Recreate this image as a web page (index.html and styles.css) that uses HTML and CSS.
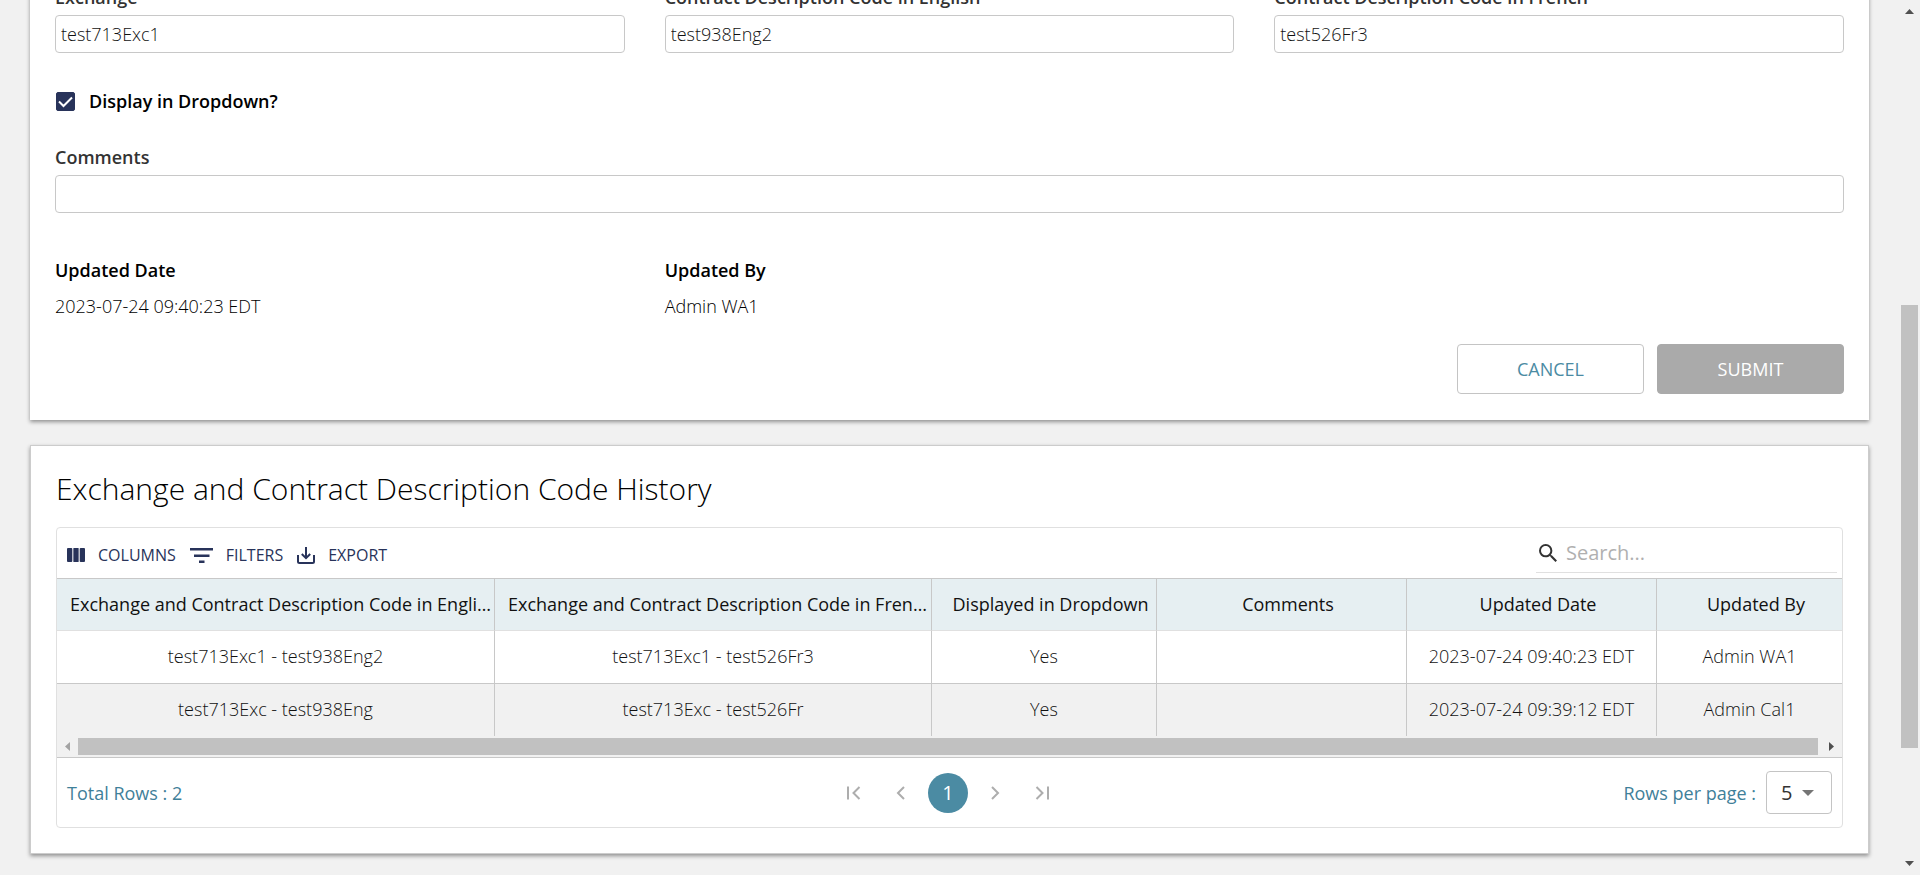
FILE: index.html
```html
<!DOCTYPE html>
<html lang="en">
<head>
<meta charset="utf-8">
<title>Exchange and Contract Description Code</title>
<link rel="stylesheet" href="styles.css">
</head>
<body>
<div class="shell">
  <main class="page">
    <form class="card card-form">
      <div class="fields">
        <div class="field">
          <label class="label" for="exchange">Exchange</label>
          <input class="input" id="exchange" type="text" value="test713Exc1">
        </div>
        <div class="field">
          <label class="label" for="code-en">Contract Description Code in English</label>
          <input class="input" id="code-en" type="text" value="test938Eng2">
        </div>
        <div class="field">
          <label class="label" for="code-fr">Contract Description Code in French</label>
          <input class="input" id="code-fr" type="text" value="test526Fr3">
        </div>
      </div>
      <label class="check">
        <span class="check-box">
          <input class="check-input" type="checkbox" checked>
          <svg class="check-mark" viewBox="0 0 19 19" aria-hidden="true"><path d="M3 9.5l4.5 4.5L16 5.5"/></svg>
        </span>
        <span class="check-text">Display in Dropdown?</span>
      </label>
      <div class="field field-comments">
        <label class="label" for="comments">Comments</label>
        <input class="input" id="comments" type="text">
      </div>
      <dl class="fields meta">
        <div class="meta-item">
          <dt class="meta-name">Updated Date</dt>
          <dd class="meta-value">2023-07-24 09:40:23 EDT</dd>
        </div>
        <div class="meta-item">
          <dt class="meta-name">Updated By</dt>
          <dd class="meta-value">Admin WA1</dd>
        </div>
      </dl>
      <div class="actions">
        <button class="button" type="button">CANCEL</button>
        <button class="button button-disabled" type="submit" disabled>SUBMIT</button>
      </div>
    </form>

    <section class="card card-history">
      <h2 class="title">Exchange and Contract Description Code History</h2>
      <div class="grid">
        <div class="toolbar">
          <div class="tools">
            <button class="tool" type="button">
              <svg width="18" height="14" viewBox="0 0 18 14" aria-hidden="true"><rect width="5.300" height="14" rx="1"/><rect x="6.350" width="5.300" height="14" rx=".5"/><rect x="12.700" width="5.300" height="14" rx="1"/></svg>
              COLUMNS
            </button>
            <button class="tool" type="button">
              <svg width="23" height="15" viewBox="0 0 23 15" aria-hidden="true"><path d="M0 0h23v2.5H0zM4 6.5h15.500V9H4zM9 12.500h5.500V15H9z"/></svg>
              FILTERS
            </button>
            <button class="tool" type="button">
              <svg width="18" height="17" viewBox="0 0 18 17" aria-hidden="true"><path d="M1 8v6.500q0 1.500 1.500 1.500h13q1.500 0 1.500-1.500V8M9 0v11M4.800 7L9 11.200 13.200 7" fill="none" stroke="currentColor" stroke-width="2"/></svg>
              EXPORT
            </button>
          </div>
          <label class="search">
            <svg width="18" height="18" viewBox="3 3 17.500 17.500" aria-hidden="true"><path d="M15.500 14h-.79l-.28-.27A6.471 6.471 0 0 0 16 9.500 6.500 6.500 0 1 0 9.500 16c1.610 0 3.090-.59 4.230-1.570l.27.28v.79l5 4.990L20.490 19l-4.990-5zm-6 0C7.010 14 5 11.990 5 9.500S7.010 5 9.500 5 14 7.010 14 9.500 11.990 14 9.500 14z"/></svg>
            <input class="search-input" type="search" placeholder="Search..." aria-label="Search">
          </label>
        </div>
        <table class="table">
          <colgroup>
            <col class="col-code-en"><col class="col-code-fr"><col class="col-shown"><col class="col-wide"><col class="col-wide"><col>
          </colgroup>
          <thead>
            <tr>
              <th>Exchange and Contract Description Code in English</th>
              <th>Exchange and Contract Description Code in French</th>
              <th>Displayed in Dropdown</th>
              <th>Comments</th>
              <th>Updated Date</th>
              <th>Updated By</th>
            </tr>
          </thead>
          <tbody>
            <tr>
              <td>test713Exc1 - test938Eng2</td>
              <td>test713Exc1 - test526Fr3</td>
              <td>Yes</td>
              <td></td>
              <td>2023-07-24 09:40:23 EDT</td>
              <td>Admin WA1</td>
            </tr>
            <tr>
              <td>test713Exc - test938Eng</td>
              <td>test713Exc - test526Fr</td>
              <td>Yes</td>
              <td></td>
              <td>2023-07-24 09:39:12 EDT</td>
              <td>Admin Cal1</td>
            </tr>
          </tbody>
        </table>
        <div class="hscroll" aria-hidden="true">
          <svg class="arrow-off" width="5" height="9" viewBox="0 0 5 9"><path d="M5 0v9L0 4.500z"/></svg>
          <div class="hscroll-thumb"></div>
          <svg class="arrow-on" width="5" height="9" viewBox="0 0 5 9"><path d="M0 0v9l5-4.500z"/></svg>
        </div>
        <div class="footer">
          <span class="count">Total Rows : 2</span>
          <nav class="pager" aria-label="Pages">
            <button class="page-button" type="button" aria-label="First page" disabled><svg width="14" height="14" viewBox="0 0 14 14"><path d="M1 .5v13M12.500 1l-6 6 6 6"/></svg></button>
            <button class="page-button" type="button" aria-label="Previous page" disabled><svg width="14" height="14" viewBox="0 0 14 14"><path d="M10 1L4 7l6 6"/></svg></button>
            <button class="page-button page-current" type="button" aria-current="page">1</button>
            <button class="page-button" type="button" aria-label="Next page" disabled><svg width="14" height="14" viewBox="0 0 14 14"><path d="M4 1l6 6-6 6"/></svg></button>
            <button class="page-button" type="button" aria-label="Last page" disabled><svg width="14" height="14" viewBox="0 0 14 14"><path d="M13 .5v13M1.500 1l6 6-6 6"/></svg></button>
          </nav>
          <div class="size">
            <label for="rows">Rows per page :</label>
            <span class="select-wrap">
              <select class="select" id="rows"><option>5</option><option>10</option><option>25</option></select>
              <svg class="select-arrow" width="12" height="6" viewBox="0 0 12 6" aria-hidden="true"><path d="M0 0h12L6 6z"/></svg>
            </span>
          </div>
        </div>
      </div>
    </section>
  </main>
  <div class="vscroll" aria-hidden="true">
    <svg class="arrow-on" width="9" height="5" viewBox="0 0 9 5"><path d="M0 5h9L4.500 0z"/></svg>
    <div class="vscroll-track"><div class="vscroll-thumb"></div></div>
    <svg class="arrow-on" width="9" height="5" viewBox="0 0 9 5"><path d="M0 0h9L4.500 5z"/></svg>
  </div>
</div>
</body>
</html>
```

FILE: styles.css
```css
* {
  box-sizing: border-box;
}

body {
  margin: 0;
  background: #f1f1f1;
  color: #333;
  font: 300 18px/24px "Open Sans", "Noto Sans", sans-serif;
}

button,
input,
select {
  font: inherit;
  color: inherit;
}

svg {
  display: block;
  flex: none;
  fill: currentColor;
}

.shell {
  display: flex;
  height: 100vh;
  overflow: hidden;
}

.page {
  display: flex;
  flex: 1;
  flex-direction: column;
  gap: 25px;
  min-width: 0;
  padding: 0 31px 0 30px;
}

.card {
  flex: none;
  background: #fff;
  border: 1px solid #ccc;
  box-shadow: 0 2px 4px rgba(0, 0, 0, 0.4);
}

/* The form is scrolled up: its top edge lies above the window. */
.card-form {
  margin-top: -41px;
  padding: 25px 24px;
  border-color: #fff;
}

.fields {
  display: grid;
  grid-template-columns: repeat(3, 1fr);
  gap: 40px;
}

.label {
  display: block;
  margin-bottom: 6px;
  font-weight: 600;
}

.input {
  display: block;
  width: 100%;
  height: 38px;
  padding: 0 5px;
  background: #fff;
  border: 1px solid #c8c8c8;
  border-radius: 4px;
  color: #111;
}

.check {
  display: flex;
  align-items: center;
  gap: 14px;
  width: max-content;
  margin-top: 36px;
  padding-left: 1px;
  color: #000;
  font-weight: 600;
}

.check-box {
  position: relative;
  width: 19px;
  height: 19px;
}

.check-input {
  display: block;
  width: 100%;
  height: 100%;
  margin: 0;
  appearance: none;
  border: 1px solid #28335a;
  border-radius: 2px;
}

.check-input:checked {
  background: #28335a;
}

.check-mark {
  position: absolute;
  inset: 0;
  fill: none;
  stroke: #fff;
  stroke-width: 2;
}

.field-comments {
  margin-top: 32px;
}

.meta {
  margin: 45px 0 0;
  color: #000;
}

.meta-name {
  font-weight: 600;
}

.meta-value {
  margin: 12px 0 0;
}

.actions {
  display: flex;
  justify-content: flex-end;
  gap: 13px;
  margin-top: 26px;
}

.button {
  width: 187px;
  height: 50px;
  background: #fff;
  border: 1px solid #c4c4c4;
  border-radius: 4px;
  color: #4b8ba3;
  font-weight: 400;
}

.button-disabled {
  background: #aaa;
  border-color: #aaa;
  color: #fff;
}

.card-history {
  padding: 25px;
}

.title {
  margin: 0 0 20px;
  color: #000;
  font-size: 30px;
  font-weight: 300;
  line-height: 36px;
}

.grid {
  border: 1px solid #e0e0e0;
  border-radius: 4px;
}

.toolbar {
  display: flex;
  align-items: flex-end;
  justify-content: space-between;
  height: 50px;
  padding: 0 5px 5px 10px;
}

.tools {
  display: flex;
  align-items: center;
  gap: 14px;
  padding-bottom: 6px;
}

.tool {
  display: flex;
  align-items: center;
  gap: 13px;
  padding: 0;
  background: none;
  border: 0;
  color: #28335a;
  font-size: 16px;
  font-weight: 400;
}

.search {
  display: flex;
  align-items: center;
  gap: 9px;
  width: 301px;
  height: 40px;
  padding: 0 3px;
  border-bottom: 1px solid #e0e0e0;
}

.search-input {
  flex: 1;
  min-width: 0;
  padding: 0;
  background: none;
  border: 0;
  font-size: 20px;
  font-weight: 400;
}

.search-input::placeholder {
  color: #b0b0b0;
}

.table {
  width: 100%;
  table-layout: fixed;
  border-collapse: separate;
  border-spacing: 0;
  color: #111;
}

.col-code-en {
  width: 438px;
}

.col-code-fr {
  width: 437px;
}

.col-shown {
  width: 225px;
}

.col-wide {
  width: 250px;
}

.table th,
.table td {
  height: 53px;
  padding: 0 0 2px;
  overflow: hidden;
  border-right: 1px solid #c8c8c8;
  border-bottom: 1px solid #c8c8c8;
  text-align: center;
  text-overflow: ellipsis;
  white-space: nowrap;
}

.table th {
  padding-left: 13px;
  background: #e6eff2;
  border-top: 1px solid #c8c8c8;
  border-bottom-color: #e0e0e0;
  font-weight: 500;
}

.table th:last-child,
.table td:last-child {
  border-right: 0;
}

.table tr:last-child td {
  height: 52px;
  border-bottom: 0;
}

.table tbody tr:nth-child(even) {
  background: #f1f1f1;
}

.hscroll {
  display: flex;
  align-items: center;
  gap: 8px;
  height: 21px;
  padding: 0 8px;
  background: #f1f1f1;
}

.hscroll-thumb {
  flex: 1;
  height: 17px;
  margin-right: 3px;
  background: #c1c1c1;
}

.arrow-on {
  color: #505050;
}

.arrow-off {
  color: #a3a3a3;
}

.footer {
  display: grid;
  grid-template-columns: 1fr auto 1fr;
  align-items: center;
  height: 70px;
  padding: 0 10px;
  border-top: 1px solid #c8c8c8;
  color: #3f8099;
  font-weight: 500;
}

.pager {
  display: flex;
  gap: 7px;
  margin-right: 3px;
}

.page-button {
  display: flex;
  align-items: center;
  justify-content: center;
  width: 40px;
  height: 40px;
  padding: 0;
  background: none;
  border: 0;
  border-radius: 50%;
  color: #adadad;
}

.page-button svg {
  fill: none;
  stroke: currentColor;
  stroke-width: 2;
}

.page-current {
  background: #4b8ba3;
  color: #fff;
  font-size: 20px;
  font-weight: 400;
}

.size {
  display: flex;
  align-items: center;
  justify-content: flex-end;
  gap: 10px;
}

.select-wrap {
  position: relative;
}

.select {
  display: block;
  width: 66px;
  height: 43px;
  padding: 0 14px;
  appearance: none;
  background: #fff;
  border: 1px solid #c4c4c4;
  border-radius: 4px;
  color: #333;
  font-size: 20px;
  font-weight: 400;
}

.select-arrow {
  position: absolute;
  top: 19px;
  right: 18px;
  color: #757575;
  pointer-events: none;
}

.vscroll {
  display: flex;
  flex: none;
  flex-direction: column;
  align-items: center;
  justify-content: space-between;
  width: 20px;
  padding: 9px 1px 9px 0;
}

.vscroll-track {
  display: flex;
  flex: 1;
  flex-direction: column;
  justify-content: flex-end;
  align-self: stretch;
  padding: 0 1px;
}

.vscroll-thumb {
  height: 443px;
  margin-bottom: 113px;
  background: #c1c1c1;
}
```
